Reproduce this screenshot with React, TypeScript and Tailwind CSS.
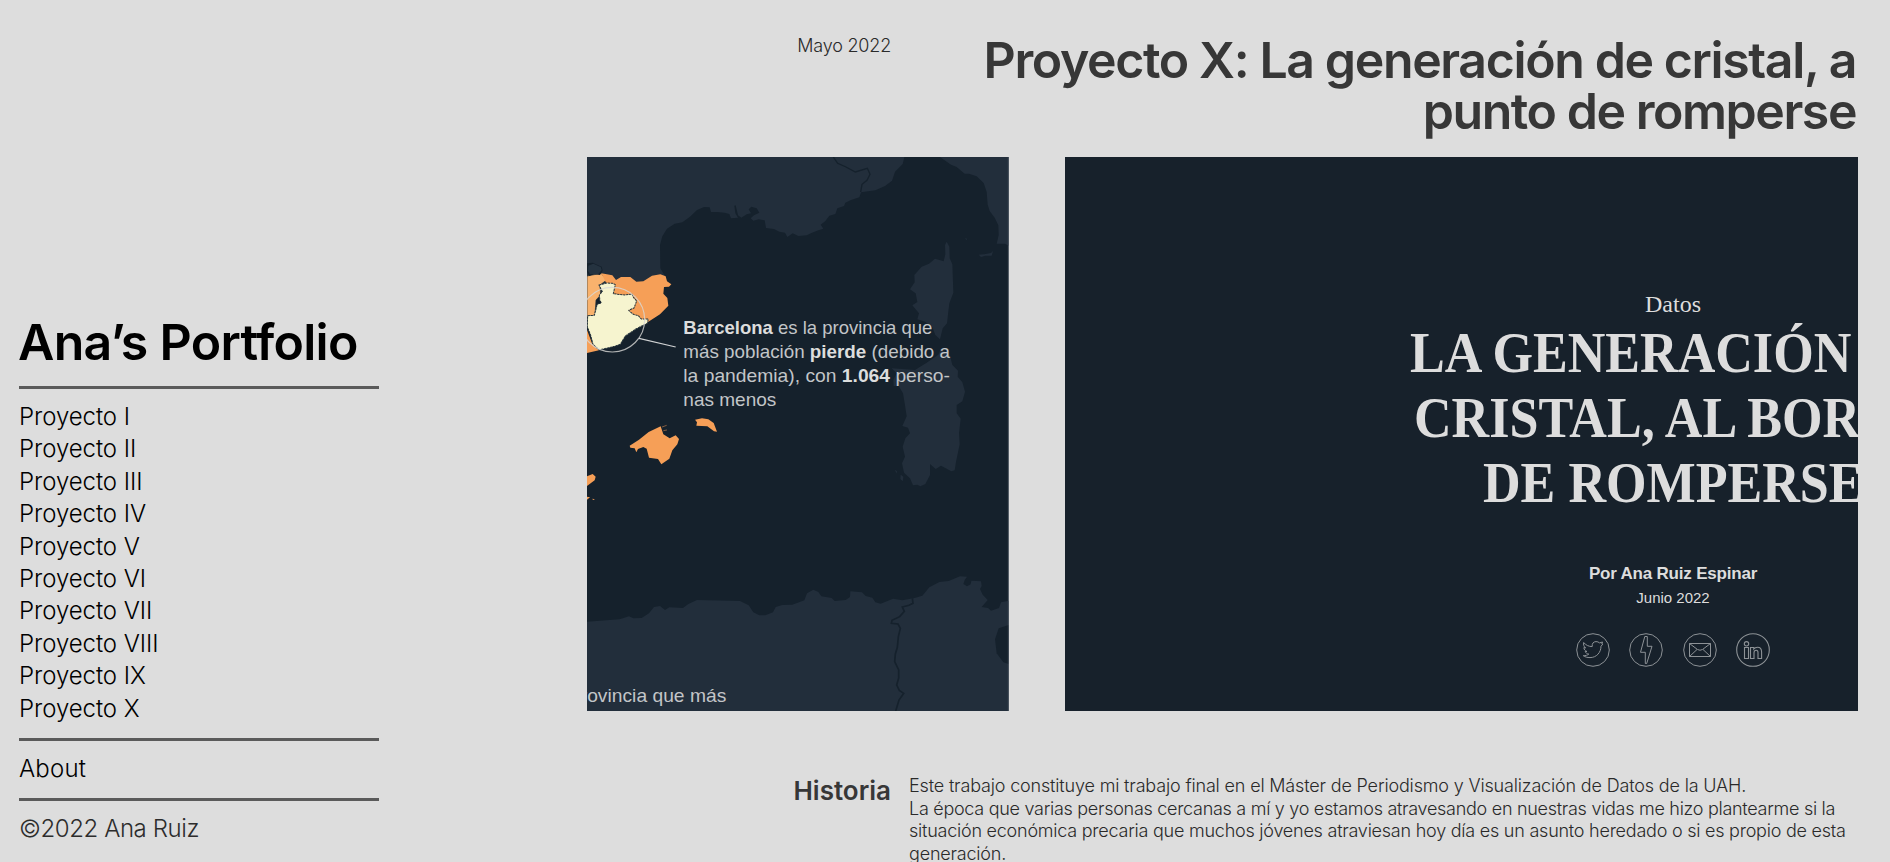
const projects = ["I", "II", "III", "IV", "V", "VI", "VII", "VIII", "IX", "X"];

function CoastMap() {
  return (
    <svg className="h-[554px] w-[421.7px] shrink-0" viewBox="21 21 1265 1662" preserveAspectRatio="none">
      <rect x="21" y="21" width="1265" height="1662" fill="#15212c" />
      <path
        fill="#222e3b"
        d="M21 21H973L968 42L945 65L936 92L915 108L886 121L843 127L838 142L813 150L796 158L792 168L772 175L766 192L748 197L736 213L722 224L730 236L715 241L696 248L680 256L655 258L638 250L622 261L615 248L598 245L582 237L558 234L554 211L536 208L520 212L512 205L522 196L538 188L530 175L514 170L506 178L513 190L500 193L484 203L474 196L467 166L463 167L466 190L474 203L453 205L448 192L434 188L412 186L393 186L389 172L372 171L351 180L330 200L307 217L284 221L261 236L247 259L240 285L241 355L256 380L262 400L100 450L21 400Z"
      />
      <path fill="none" stroke="#15212c" strokeWidth="4" d="M760 21L773 40L798 51L826 66L862 55L870 73L861 91L846 103L842 126" />
      <path fill="#222e3b" d="M1080 21H1286V287L1275 281H1250L1256 255L1255 226L1244 203L1229 183L1223 164L1220 126L1211 99L1190 79L1167 71L1154 71L1130 51L1113 44Z" />
      <path
        fill="#222e3b"
        d="M1100 275L1108 290L1109 325L1117 343L1120 428L1108 460L1104 493L1101 520L1088 535L1080 568L1066 555L1057 532L1035 515L1012 508L1017 490L997 466L1012 456L1007 430L990 418L1004 397L1003 375L1025 350L1047 341L1065 326L1091 334L1096 313L1095 285Z"
      />
      <path
        fill="#222e3b"
        d="M1083 595L1110 618L1117 645L1134 662L1133 680L1147 697L1155 725L1147 754L1130 765V790L1142 806L1137 850L1139 883L1128 935L1124 961L1114 964L1083 947L1067 957L1050 942V975L1036 1002L1021 1009L1012 1004L999 1006L990 985L972 968L966 940L975 920L968 890L976 865L990 850L984 833L967 828L980 799L974 760L969 730L956 708H941L940 690L950 670L935 655L1005 660L1040 638L1075 614Z"
      />
      <path fill="#222e3b" d="M1196 314L1213 313L1233 309L1239 303L1235 317L1216 317L1203 321ZM945 959L951 964L949 971ZM962 974L970 980L968 994L961 987ZM1155 265L1162 266L1159 270Z" />
      <path
        fill="#222e3b"
        d="M21 1415L119 1408L147 1399L160 1405L185 1404L207 1390L222 1371L240 1368L255 1380L268 1372L309 1374L325 1362L351 1350L480 1353L506 1366L520 1387L538 1396H556L579 1387L587 1371L607 1365L637 1364L673 1351L681 1330L700 1319L715 1326L724 1339L755 1344L764 1353L797 1350L810 1341L811 1324L846 1327L857 1338L877 1343L886 1357L902 1361L939 1346L967 1351L1004 1344L1027 1337L1048 1312L1078 1296L1106 1293L1140 1279L1161 1280L1154 1290L1150 1302L1161 1309L1172 1303L1174 1292L1203 1294L1205 1308L1200 1317L1208 1334L1223 1350L1205 1371L1224 1374L1233 1382L1257 1374L1263 1357L1286 1352V1683H21Z"
      />
      <path fill="#15212c" d="M1286 1425L1256 1435L1245 1468L1250 1510L1270 1537L1286 1542Z" />
      <path fill="none" stroke="#15212c" strokeWidth="5" d="M997 1345L999 1360L987 1366L967 1371L973 1384L959 1400L936 1411L934 1420L954 1422L961 1435L955 1460L952 1492L946 1512L944 1535L956 1560L956 1584L950 1605L958 1621L971 1630L957 1650L947 1683" />

      <path fill="#f9b26d" stroke="#26343d" strokeWidth="2" d="M21 378L64 370L80 390L60 405L62 435L48 450L45 495L21 500Z" />
      <path fill="#f69f57" d="M21 540L36 580L57 601L21 609Z" />
      <path fill="#15212c" d="M21 340L38 338L65 350L68 362L60 375L42 372L27 378L21 365Z" />
      <path fill="#253340" d="M25 347L40 341L62 351L65 360L55 372L30 373L24 362Z" />
      <path
        fill="#f69f57"
        d="M64 370L97 376L108 390L123 381L151 381L169 395L190 394L216 377L241 373L257 379L261 394L274 403L267 410L252 411L250 431L262 444L265 467L240 493L204 516L150 500L100 440L80 402Z"
      />
      <path
        fill="#f6f4cf"
        stroke="#26343d"
        strokeWidth="3"
        strokeDasharray="7 2"
        strokeLinejoin="round"
        d="M57 405L80 399L98 400L106 404L100 431L133 435L156 432L161 443L170 453L162 474L146 481L160 493L175 497L184 507L205 507L202 520L169 536L136 558L121 583L104 589L57 600L39 583L32 556L22 530L23 497L43 496L51 465L60 455L58 435L67 425Z"
      />
      <circle cx="59" cy="457" r="5" fill="#15212c" />
      <circle cx="97" cy="509" r="97" fill="none" stroke="#d8d8d6" strokeOpacity="0.8" strokeWidth="3.5" />
      <path d="M177 565L287 591" stroke="#d0d2d3" strokeWidth="3.5" />

      <path fill="#f69f57" d="M149 887L177 869L206 846L242 829L250 853L269 865L287 856L297 867L292 883L277 901L268 926L244 943L234 927L207 923L200 896L190 891L174 897L169 907L164 895L151 893Z" />
      <path fill="none" stroke="#b97a4b" strokeWidth="2" d="M246 831L260 826M250 842L261 840" />
      <path fill="#f69f57" d="M345 809L366 805L385 808L401 819L411 845L402 844L382 829L349 827L351 817Z" />
      <path fill="#f69f57" d="M21 979L38 972L47 980L44 991L30 1001L21 1008ZM21 1040L30 1042L21 1049ZM37 1046L45 1048L39 1050Z" />

      <g fill="#c2c5c8" fontFamily="'Liberation Sans', sans-serif" fontSize="57">
        <text x="310" y="551" textLength="747" lengthAdjust="spacingAndGlyphs">
          <tspan fontWeight="700" fill="#dcdddd">Barcelona</tspan> es la provincia que
        </text>
        <text x="310" y="624" textLength="800" lengthAdjust="spacingAndGlyphs">
          más población <tspan fontWeight="700" fill="#dcdddd">pierde</tspan> (debido a
        </text>
        <text x="310" y="696" textLength="800" lengthAdjust="spacingAndGlyphs">
          la pandemia), con <tspan fontWeight="700" fill="#dcdddd">1.064</tspan> perso-
        </text>
        <text x="310" y="768" textLength="279" lengthAdjust="spacingAndGlyphs">nas menos</text>
        <text x="-30" y="1655" textLength="469" lengthAdjust="spacingAndGlyphs">provincia que más</text>
      </g>
      <path d="M1285 21V1683" stroke="#59636c" strokeWidth="2" />
    </svg>
  );
}

const ring = <circle cx="17" cy="17" r="16.3" />;

function SocialIcons() {
  return (
    <div className="flex gap-[19.3px] text-[#8d9296]">
      <svg className="size-[34px]" viewBox="0 0 34 34" fill="none" stroke="currentColor" strokeWidth="1">
        {ring}
        <path
          strokeLinejoin="round"
          d="M7.700 9.500C9.800 12.200 12.600 13.500 16.200 13.600C15.800 10.500 17.400 8.700 20 8.600C21.400 8.600 22.600 9 23.500 9.900L26.500 9L25.800 11L26.800 11.200L25 13.200C25 19.500 20.500 24.600 14 24.600C11.300 24.600 9 24 7.300 22.700C9.600 22.800 11.400 22.200 12.800 21.100C11 20.900 9.700 20 9.200 18.500H11C9 17.800 7.900 16.500 7.900 14.600L9.600 15C7.800 13.500 7.200 11.500 7.700 9.500Z"
        />
      </svg>
      <svg className="size-[34px]" viewBox="0 0 34 34" fill="none" stroke="currentColor" strokeWidth="1">
        {ring}
        <path d="M15.800 3.500L11.500 19.300H16.300V30.500H17.700L23 13.300H18.300V3.500Z" strokeLinejoin="round" />
      </svg>
      <svg className="size-[34px]" viewBox="0 0 34 34" fill="none" stroke="currentColor" strokeWidth="1">
        {ring}
        <path d="M6.500 10.500H27.500V23.500H6.500ZM6.500 10.500L14.500 16.500Q17 18 19.500 16.500L27.500 10.500M6.500 23.500L14 16.500M27.500 23.500L20 16.500" />
      </svg>
      <svg className="size-[34px]" viewBox="0 0 34 34" fill="none" stroke="currentColor" strokeWidth="1.1">
        {ring}
        <circle cx="10.500" cy="10.800" r="2.200" />
        <path d="M8.500 14.500H12.500V25.500H8.500ZM14.500 14.500H17.800V16Q19 14.200 21.500 14.200Q25.600 14.200 25.600 19V25.500H22V19.500Q22 17.300 20.200 17.300Q18 17.300 18 19.800V25.500H14.500Z" />
      </svg>
    </div>
  );
}

function CoverCard() {
  return (
    <div className="h-[554px] w-[793px] overflow-hidden bg-[#17212b] pl-[337px] text-[#dddddd]">
      <div className="flex w-[542px] flex-col items-center">
        <p className="mt-[133px] font-['Liberation_Serif',serif] text-[24px] leading-[28px] whitespace-nowrap">Datos</p>
        <h2 className="mt-[2px] scale-x-[.898] text-center font-['Liberation_Serif',serif] text-[58px] leading-[65px] font-bold whitespace-nowrap">
          LA GENERACIÓN DE
          <br />
          CRISTAL, AL BORDE
          <br />
          DE ROMPERSE
        </h2>
        <p className="mt-[47px] font-['Liberation_Sans',sans-serif] text-[17px] leading-[24px] font-bold tracking-[-0.2px]">Por Ana Ruiz Espinar</p>
        <p className="mt-[1px] font-['Liberation_Sans',sans-serif] text-[15px] leading-[22px]">Junio 2022</p>
        <div className="mt-[24px]">
          <SocialIcons />
        </div>
      </div>
    </div>
  );
}

export default function App() {
  return (
    <div className="flex h-screen overflow-hidden bg-[#dddddd] font-['Inter','Liberation_Sans',sans-serif] text-[#373737]">
      <aside className="w-[587px] shrink-0 pt-[312px] pl-[19px]">
        <div className="w-[360px] text-black">
          <h1 className="-ml-px w-max text-[50px] leading-[60px] font-semibold tracking-[-0.7px]">Ana’s Portfolio</h1>
          <hr className="mt-[14px] border-t-[3px] border-[#5a5a5a]" />
          <nav className="mt-[12px] text-[24px] leading-[32.4px] font-light tracking-[-0.05px]">
            {projects.map((n) => (
              <a key={n} className="block w-max">
                Proyecto {n}
              </a>
            ))}
          </nav>
          <hr className="mt-[13px] border-t-[3px] border-[#5a5a5a]" />
          <a className="mt-[12px] block w-max text-[24px] leading-[32.4px] font-light tracking-[0.2px]">About</a>
          <hr className="mt-[12.6px] border-t-[3px] border-[#5a5a5a]" />
          <p className="mt-[12px] w-max text-[24px] leading-[32.4px] font-light tracking-[-0.42px] text-[#2c2c2c]">©2022 Ana Ruiz</p>
        </div>
      </aside>
      <main className="w-[1271px] shrink-0 pt-[35px]">
        <header className="flex justify-between">
          <p className="w-[304px] text-right text-[18px] leading-[22.7px] font-light tracking-[-0.2px] text-[#2a2a2a]">Mayo 2022</p>
          <h2 className="w-[950px] pr-[2px] text-right text-[50px] leading-[51px] font-semibold">
            <span className="tracking-[-1.38px]">Proyecto X: La generación de cristal, a</span>
            <br />
            <span className="tracking-[-1.45px]">punto de romperse</span>
          </h2>
        </header>
        <div className="mt-[20px] flex justify-between">
          <CoastMap />
          <CoverCard />
        </div>
        <section className="mt-[64px] flex">
          <h3 className="w-[304px] shrink-0 text-right text-[26px] leading-[31px] font-semibold">Historia</h3>
          <p className="ml-[18px] shrink-0 text-[18px] leading-[22.7px] font-light whitespace-nowrap text-[#2a2a2a]">
            <span className="tracking-[-0.165px]">Este trabajo constituye mi trabajo final en el Máster de Periodismo y Visualización de Datos de la UAH.</span>
            <br />
            <span className="tracking-[-0.285px]">La época que varias personas cercanas a mí y yo estamos atravesando en nuestras vidas me hizo plantearme si la</span>
            <br />
            <span className="tracking-[-0.235px]">situación económica precaria que muchos jóvenes atraviesan hoy día es un asunto heredado o si es propio de esta</span>
            <br />
            <span className="tracking-[-0.2px]">generación.</span>
          </p>
        </section>
      </main>
    </div>
  );
}
